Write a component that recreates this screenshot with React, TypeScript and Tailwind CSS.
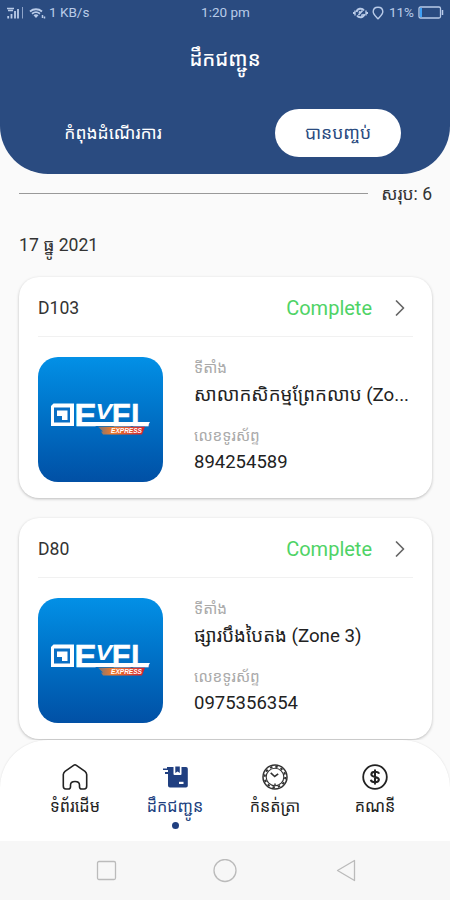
import type { ReactNode } from "react";
import { ChevronRight } from "lucide-react";

type Delivery = {
  code: string;
  status: string;
  place: string;
  phone: string;
};

const DELIVERIES: Delivery[] = [
  { code: "D103", status: "Complete", place: "សាលាកសិកម្មព្រែកលាប (Zo...", phone: "894254589" },
  { code: "D80", status: "Complete", place: "ផ្សារបឹងបៃតង (Zone 3)", phone: "0975356354" },
];

function StatusBar() {
  return (
    <div className="flex h-[25px] items-center justify-between pl-[7px] pr-[6px] text-[13.5px] text-[#b9cbe8]">
      <div className="flex w-[120px] items-center">
        <svg width="17" height="14" viewBox="0 0 17 14" fill="none" stroke="currentColor">
          <path d="M0 2.5h7M1 4.5h5" strokeWidth="1.6" />
          <path d="M1.2 10v2.500M4.5 8v4.500M8 5v7.500M11 3v9.500" strokeWidth="1.8" />
          <path d="M15.5 1v11.500" strokeWidth="1" opacity="0.7" />
        </svg>
        <svg className="ml-[5px]" width="18" height="12" viewBox="0 0 18 12" fill="none" stroke="currentColor">
          <path d="M1 4.500c3.500-3 8.500-3 12 0M3 6.700c2.500-2 5.500-2 8 0" strokeWidth="1.800" />
          <path d="M4.500 8.200c1.500-1.200 3.500-1.200 5 0L7 11z" fill="currentColor" stroke="none" />
          <path d="M13.500 8v3M15.500 9.500v2" strokeWidth="1.500" />
        </svg>
        <span className="ml-[2px] whitespace-nowrap">1 KB/s</span>
      </div>
      <span className="whitespace-nowrap">1:20 pm</span>
      <div className="flex w-[120px] items-center justify-end whitespace-nowrap">
        <svg width="15" height="14" viewBox="0 0 15 14" fill="none" stroke="currentColor">
          <path d="M3.500 6a4.200 4.200 0 0 1 7.500-1.500M11.500 8a4.200 4.200 0 0 1-7.500 1.500" strokeWidth="2" />
          <path d="M2 4.500v5M0.700 6v2M13 4.500v5M14.300 6v2" strokeWidth="1.400" />
          <path d="M5.500 9l4-4.500M6 5.500l1 1M8.500 8.500l1 1" strokeWidth="1.800" />
        </svg>
        <svg className="ml-[4px]" width="12" height="14" viewBox="0 0 12 14" fill="none" stroke="currentColor" strokeWidth="1.400">
          <path d="M6 1.200c3 0 4.800 2 4.800 4.500S8.500 10 6 12.800C3.500 10 1.200 8.200 1.200 5.700S3 1.200 6 1.200z" />
        </svg>
        <span className="ml-[5px]">11%</span>
        <svg className="ml-[4px]" width="26" height="13" viewBox="0 0 26 13" fill="none">
          <rect x="1" y="1" width="21.500" height="11" rx="1.500" stroke="currentColor" strokeWidth="1.300" />
          <rect x="1.800" y="1.800" width="2.200" height="9.400" fill="#3fa0f5" />
          <path d="M24.500 4v5" stroke="currentColor" strokeWidth="1.500" />
        </svg>
      </div>
    </div>
  );
}

function Header() {
  return (
    <header className="h-[174px] rounded-b-[48px] bg-[#2a4b80] text-white">
      <StatusBar />
      <h1 className="flex h-[68px] items-center justify-center text-[20px] font-medium">ដឹកជញ្ជូន</h1>
      <div className="flex items-center justify-between pl-[50px] pr-[49px] pt-[16px] text-[17.5px]">
        <button className="h-[48px] w-[126px] whitespace-nowrap">កំពុងដំណើរការ</button>
        <button className="h-[48px] w-[126px] whitespace-nowrap rounded-full bg-white text-[#2a4b80]">បានបញ្ចប់</button>
      </div>
    </header>
  );
}

function Logo() {
  return (
    <div className="size-[125px] shrink-0 overflow-hidden rounded-[20px] bg-linear-to-b from-[#0390e6] to-[#0150a5]">
      <svg width="125" height="125" viewBox="0 0 125 125">
        {/* D mark */}
        <path d="M15.500 46.500H36V69H13V49z" fill="#fff" />
        <path d="M16 50.500h16v15H16z" fill="#0a6fc4" />
        <path d="M19 53.500h10.500V63H24v-4h-5z" fill="#fff" />
        <g fill="#fff" fontFamily="Liberation Sans, sans-serif" fontWeight="700">
          <text x="36.500" y="69" fontSize="32" stroke="#fff" strokeWidth="0.6" textLength="22" lengthAdjust="spacingAndGlyphs">E</text>
          <text x="57.500" y="62" fontSize="22" fontStyle="italic" textLength="16.500" lengthAdjust="spacingAndGlyphs">V</text>
          <text x="74" y="69" fontSize="32" stroke="#fff" strokeWidth="0.6" textLength="37" lengthAdjust="spacingAndGlyphs">EL</text>
        </g>
        <path d="M42 65h70l-2.500 4H42z" fill="#fff" />
        <path d="M60 69.800h47l-3 7.700H65l-2-3h2z" fill="url(#ribbon)" />
        <text x="73" y="76.200" fontSize="7.500" fontWeight="700" fontStyle="italic" fill="#fff" fontFamily="Liberation Sans, sans-serif" textLength="31" lengthAdjust="spacingAndGlyphs">EXPRESS</text>
        <defs>
          <linearGradient id="ribbon">
            <stop offset="0" stopColor="#7a7478" />
            <stop offset="0.3" stopColor="#ef7b2c" />
            <stop offset="1" stopColor="#d3202f" />
          </linearGradient>
        </defs>
      </svg>
    </div>
  );
}

function DeliveryCard({ item }: { item: Delivery }) {
  return (
    <article className="h-[221px] rounded-[20px] bg-white px-[19px] shadow-[0_1px_3px_rgba(0,0,0,0.25)]">
      <div className="flex h-[60px] items-center border-b border-[#f1f1f1] pt-[2px]">
        <span className="flex-1 pt-px text-[17.6px] text-[#333]">{item.code}</span>
        <span className="text-[20px] text-[#4fd366]">{item.status}</span>
        <ChevronRight className="ml-[14px] mr-[-1px] text-[#666]" size={28} strokeWidth={1.5} />
      </div>
      <div className="flex pt-[20px]">
        <Logo />
        <div className="ml-[31px] flex-1 whitespace-nowrap text-[18.5px] text-[#222]">
          <div className="h-[23px] text-[15.3px] leading-[23px] text-[#aaa]">ទីតាំង</div>
          <div className="h-[30px] text-[18.7px] leading-[30px]">{item.place}</div>
          <div className="mt-[14px] h-[24px] text-[15.3px] leading-[24px] text-[#aaa]">លេខទូរស័ព្ទ</div>
          <div className="h-[28px] leading-[28px]">{item.phone}</div>
        </div>
      </div>
    </article>
  );
}

function HomeIcon() {
  return (
    <svg width="28" height="28" viewBox="0 0 28 28" fill="none" stroke="#222" strokeWidth="1.600" strokeLinejoin="round">
      <path d="M12.600 2.300 4 8.300Q2.500 9.500 2.300 11.500V23q0 3 2.500 3h2.400q2.300 0 2.300-2.300V22q0-3.500 4.500-3.500t4.500 3.500v1.700q0 2.300 2.300 2.300h2.400q2.500 0 2.500-3V11.500Q25.500 9.500 24 8.300l-8.600-6q-1.400-1-2.800 0z" />
    </svg>
  );
}

function PackageIcon() {
  return (
    <svg width="28" height="28" viewBox="0 0 28 28">
      <path d="M6 4h6.500v7q0 1 1 1h6q1 0 1-1V4H25q1.800 0 1.800 1.800v17Q26.800 24.500 25 24.500H9q-2 0-2-2V11H4V9h3V7H2V5.500H6z" fill="#203f80" />
      <path d="M14.300 3.500h4.500v6.500l-2.200-1.600-2.300 1.600z" fill="#203f80" />
      <path d="M18 18.800h4.500v2.200H18z" fill="#fff" />
    </svg>
  );
}

function ClockIcon() {
  return (
    <svg width="28" height="28" viewBox="0 0 28 28" fill="none" stroke="#333">
      <circle cx="14" cy="14" r="12" strokeWidth="1.500" />
      <circle cx="14" cy="14" r="10.300" strokeWidth="2" strokeDasharray="2.400 2.994" />
      <circle cx="14" cy="14" r="8.800" strokeWidth="1.100" />
      <path d="m9.700 9.800 4 3.700 3.500-2.600" strokeWidth="1.600" />
      <path d="M14 20.500v2" strokeWidth="1.500" />
    </svg>
  );
}

function DollarIcon() {
  return (
    <svg width="28" height="28" viewBox="0 0 28 28" fill="none" stroke="#222">
      <circle cx="14" cy="14" r="11.800" strokeWidth="1.800" />
      <path d="M18 10.800Q17.500 8.800 14 8.800t-3.700 2.500q0 2 3.700 2.600t3.900 2.700q0 2.600-3.900 2.600-3.700 0-4.200-2.400M14 6.500v15" strokeWidth="2" />
    </svg>
  );
}

function NavItem({ icon, label, active = false }: { icon: ReactNode; label: string; active?: boolean }) {
  return (
    <div className={`flex w-[100px] flex-col items-center ${active ? "text-[#203f80]" : "text-[#222]"}`}>
      {icon}
      <span className="mt-[4px] h-[24px] whitespace-nowrap text-[16.2px] leading-[24px]">{label}</span>
      {active && <span className="mt-[3px] size-[7px] rounded-full bg-[#203f80]" />}
    </div>
  );
}

export default function App() {
  return (
    <div className="flex h-[900px] w-[450px] flex-col overflow-hidden bg-[#fafafa] font-[Roboto,'Noto_Sans_Khmer','Noto_Sans',sans-serif]">
      <Header />
      <main className="h-[566px] overflow-hidden pl-[19px] pr-[18px] text-[#333]">
        <div className="flex h-[40px] items-center">
          <div className="mb-[2px] h-px w-[349px] bg-[#999]" />
          <span className="ml-auto whitespace-nowrap text-[17.5px]">សរុប: 6</span>
        </div>
        <div className="flex h-[63px] items-center text-[17.6px]">17 ធ្នូ 2021</div>
        <div className="flex flex-col gap-[20px]">
          {DELIVERIES.map((item) => (
            <DeliveryCard key={item.code} item={item} />
          ))}
        </div>
      </main>
      <nav className="flex h-[101px] justify-center rounded-t-[48px] bg-white pt-[23px] shadow-[0_0_2px_rgba(0,0,0,0.12)]">
        <NavItem icon={<HomeIcon />} label="ទំព័រដើម" />
        <NavItem icon={<PackageIcon />} label="ដឹកជញ្ជូន" active />
        <NavItem icon={<ClockIcon />} label="កំនត់ត្រា" />
        <NavItem icon={<DollarIcon />} label="គណនី" />
      </nav>
      <div className="flex h-[59px] items-center justify-between bg-[#f7f7f7] pl-[96px] pr-[93px]">
        <svg width="22" height="24" viewBox="0 0 22 24" fill="none" stroke="#bbb" strokeWidth="1.300">
          <rect x="1.500" y="2.500" width="18" height="18" rx="1.500" />
        </svg>
        <svg className="mr-[3px]" width="24" height="24" viewBox="0 0 24 24" fill="none" stroke="#bbb" strokeWidth="1.300">
          <circle cx="12" cy="11.500" r="11" />
        </svg>
        <svg width="22" height="24" viewBox="0 0 22 24" fill="none" stroke="#bbb" strokeWidth="1.300" strokeLinejoin="round">
          <path d="M19.500 1.500v20L2.500 11.500z" />
        </svg>
      </div>
    </div>
  );
}
